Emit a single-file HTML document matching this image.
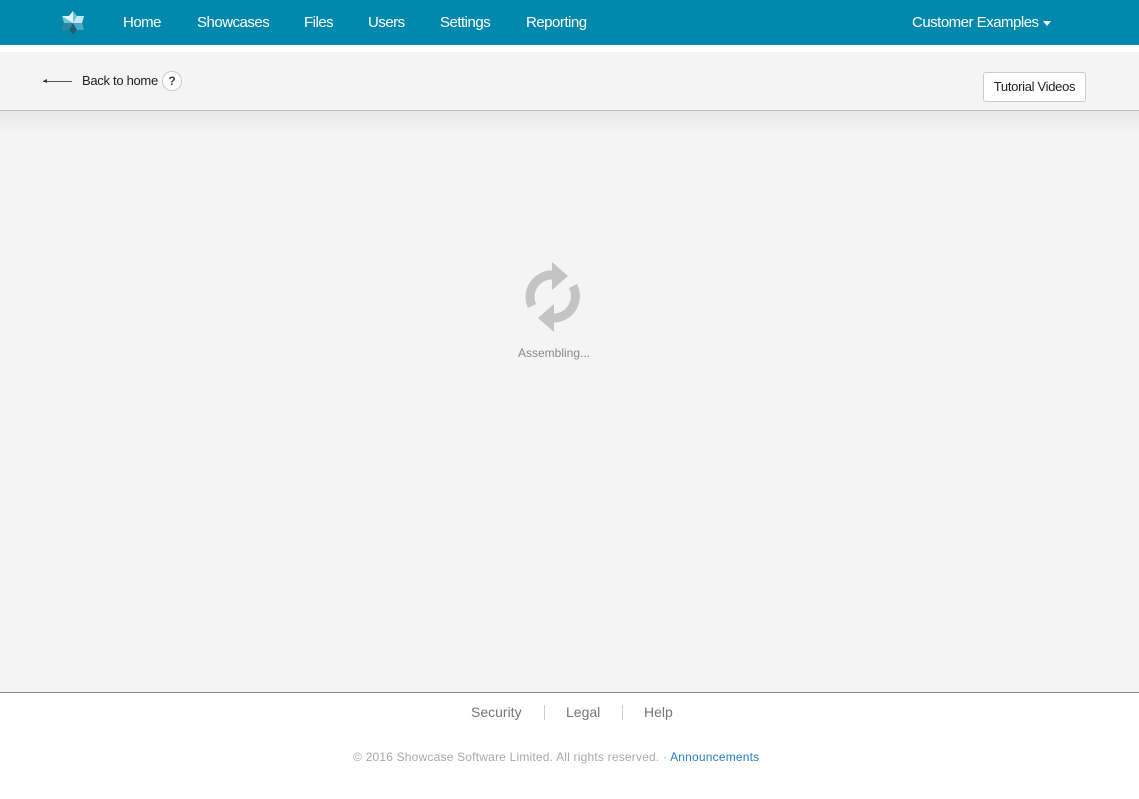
<!DOCTYPE html>
<html><head><style>
*{margin:0;padding:0;box-sizing:border-box}
body{width:1139px;height:799px;background:#fff;font-family:"Liberation Sans",sans-serif;position:relative;overflow:hidden}
.nav{position:absolute;left:0;top:0;width:1139px;height:45px;background:#0089ad}
.nav span{position:absolute;top:14px;color:#fff;font-size:15px;letter-spacing:-0.5px}
.sub{position:absolute;left:0;top:52px;width:1139px;height:59px;background:#f4f4f4;border-bottom:1px solid #bbb}
.main{position:absolute;left:0;top:111px;width:1139px;height:582px;background:linear-gradient(#e8e8e8,#f4f4f4 22px);border-bottom:1px solid #888}
.btn{position:absolute;left:983px;top:72px;width:103px;height:30px;background:#fff;border:1px solid #ccc;border-radius:3px;font-size:13px;color:#222;text-align:center;line-height:28px;letter-spacing:-0.3px}
.ft{position:absolute;top:704px;font-size:14px;color:#777}
.sep{position:absolute;top:705px;width:1px;height:15px;background:#ccc}
</style></head><body>
<div class="nav">
<svg style="position:absolute;left:60px;top:10px" width="26" height="26" viewBox="0 0 26 26">
<polygon points="13,1 17,6 24,6 22,13 24,20 17,20 13,25 9,20 2,20 4,13 2,6 9,6" fill="#6fc3da"/>
<polygon points="13,13 17,6 24,6 22,13" fill="#c2e8f2"/>
<polygon points="13,13 22,13 24,20 17,20" fill="#4aa9c7"/>
<polygon points="13,13 17,20 13,25 9,20" fill="#1b5f7a"/>
<polygon points="13,13 9,20 2,20 4,13" fill="#2f84a2"/>
<polygon points="13,13 13,1 9,6 2,6" fill="#e0f4f9"/>
</svg>
<span style="left:123px">Home</span>
<span style="left:197px">Showcases</span>
<span style="left:304px">Files</span>
<span style="left:368px">Users</span>
<span style="left:440px">Settings</span>
<span style="left:526px">Reporting</span>
<span style="left:912px">Customer Examples <span style="position:static;display:inline-block;border-left:4px solid transparent;border-right:4px solid transparent;border-top:5px solid #fff;vertical-align:middle;margin-left:1px"></span></span>
</div>
<div class="sub"></div>
<div style="position:absolute;left:43px;top:81px;width:29px;height:1px;background:#555"></div>
<div style="position:absolute;left:43px;top:79px;border-right:4px solid #333;border-top:2px solid transparent;border-bottom:2px solid transparent"></div>
<div style="position:absolute;left:82px;top:73px;font-size:13px;color:#222;letter-spacing:-0.3px">Back to home</div>
<div style="position:absolute;left:162px;top:71px;width:20px;height:20px;border:1px solid #ccc;border-radius:50%;background:#fff;font-size:12px;font-weight:bold;color:#444;text-align:center;line-height:18px">?</div>
<div class="btn">Tutorial Videos</div>
<div class="main"></div>
<svg style="position:absolute;left:524px;top:262px" width="58" height="70" viewBox="0 0 58 70">
<g fill="none" stroke="#c4c4c4" stroke-width="9">
<path d="M8,44 A22,22 0 0 1 30,13"/>
<path d="M49,24 A22,22 0 0 1 28,56"/>
</g>
<polygon points="28,0 44,14 28,28" fill="#c4c4c4"/>
<polygon points="30,42 14,56 30,70" fill="#c4c4c4"/>
</svg>
<div style="position:absolute;left:0;width:1108px;top:346px;text-align:center;font-size:12px;color:#888">Assembling...</div>
<div class="ft" style="left:471px">Security</div>
<div class="sep" style="left:544px"></div>
<div class="ft" style="left:566px">Legal</div>
<div class="sep" style="left:622px"></div>
<div class="ft" style="left:644px">Help</div>
<div style="position:absolute;left:353px;top:750px;font-size:12px;color:#aaa;letter-spacing:0.2px">© 2016 Showcase Software Limited. All rights reserved. · <span style="color:#2a7bc4">Announcements</span></div>
</body></html>
